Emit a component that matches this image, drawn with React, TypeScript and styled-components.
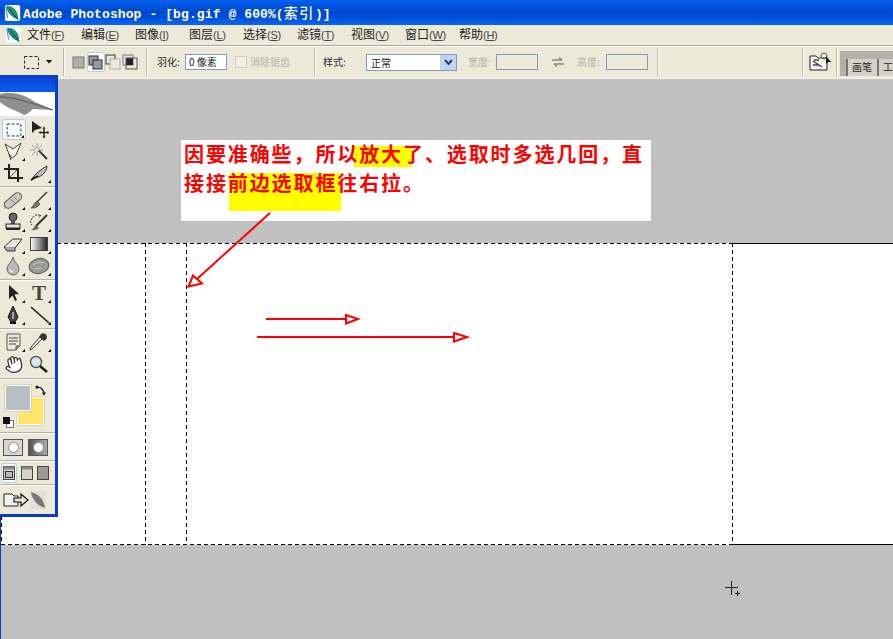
import React from "react";
import styled, { createGlobalStyle, css } from "styled-components";
import { Hand } from "lucide-react";

const Global = createGlobalStyle`
  html, body { margin: 0; padding: 0; background: #c0c0c0; overflow: hidden; }
  * { box-sizing: border-box; }
`;

const UI = `"Noto Sans CJK SC", "Liberation Sans", sans-serif`;
const Ml = css<{ $ml?: number }>`
  margin-left: ${(p) => p.$ml ?? 0}px;
  flex: none;
`;

const Page = styled.div`
  position: relative;
  width: 893px;
  height: 639px;
  display: flex;
  flex-direction: column;
  overflow: hidden;
  font-family: ${UI};
`;

/* title bar */
const TitleBar = styled.header`
  height: 25px;
  display: flex;
  align-items: center;
  padding-left: 4px;
  gap: 1px;
  background: linear-gradient(180deg, #0a62ee 0%, #0058e6 16%, #0048cc 48%, #0050dc 72%, #0a66f2 100%);
`;
const TitleText = styled.span`
  color: #fff;
  font: 700 13px/1 "Liberation Mono", "Noto Sans CJK SC", monospace;
  white-space: pre;
  letter-spacing: 0.1px;
`;
const TitleCjk = styled.span`
  font-family: "Noto Sans CJK SC", sans-serif;
  font-size: 14px;
  font-weight: 500;
  letter-spacing: 1.6px;
`;

/* menu bar */
const MenuBar = styled.nav`
  height: 20px;
  display: flex;
  align-items: center;
  padding: 0 0 1px 5px;
  background: #ece9d8;
`;
const MenuLogo = styled.span`
  width: 22px;
  height: 18px;
  flex: none;
  display: flex;
`;
const MenuItem = styled.span`
  width: 54px;
  flex: none;
  font-size: 12px;
  line-height: 18px;
  color: #1c1c1c;
  white-space: nowrap;
`;
const Mnemonic = styled.span`
  font-family: "Liberation Sans", sans-serif;
  font-size: 11px;
  color: #444;
  letter-spacing: -0.3px;
`;

/* options bar */
const OptionsBar = styled.div`
  height: 34px;
  display: flex;
  align-items: center;
  background: #ece9d8;
  border-top: 1px solid #aca899;
  box-shadow: inset 0 1px 0 #fff;
  border-bottom: 1px solid #f6f4ea;
`;
const Sep = styled.span<{ $ml?: number }>`
  ${Ml}
  width: 2px;
  height: 28px;
  background: linear-gradient(90deg, #bdbbac 50%, #fbfaf4 50%);
`;
const IconSlot = styled.span<{ $ml?: number; $w: number; $active?: boolean }>`
  ${Ml}
  width: ${(p) => p.$w}px;
  height: 18px;
  display: flex;
  align-items: center;
  justify-content: center;
  border-radius: 2px;
  ${(p) => p.$active && "background:#f7f9fb; box-shadow: 0 0 0 1px #b9cfe0;"}
`;
const OptLabel = styled.span<{ $ml?: number; $w: number; $off?: boolean }>`
  ${Ml}
  width: ${(p) => p.$w}px;
  font-size: 10px;
  line-height: 14px;
  white-space: nowrap;
  color: ${(p) => (p.$off ? "#b5b3a8" : "#2a2a2a")};
`;
const Field = styled.span<{ $ml?: number; $off?: boolean }>`
  ${Ml}
  width: 42px;
  height: 16px;
  background: ${(p) => (p.$off ? "#ece9d8" : "#fff")};
  border: 1px solid #7f9db9;
  font-size: 10px;
  line-height: 14px;
  padding-left: 3px;
  color: #222;
  white-space: nowrap;
`;
const Check = styled.span<{ $ml?: number }>`
  ${Ml}
  width: 12px;
  height: 12px;
  background: #f3f1e6;
  border: 1px solid #cfcdc0;
`;
const Dropdown = styled.span<{ $ml?: number }>`
  ${Ml}
  width: 91px;
  height: 17px;
  display: flex;
  background: #fff;
  border: 1px solid #7f9db9;
  font-size: 10px;
  line-height: 15px;
  color: #222;
`;
const DropValue = styled.span`
  flex: 1;
  padding-left: 4px;
`;
const DropButton = styled.span`
  width: 16px;
  background: #c1d3f2;
  display: flex;
  align-items: center;
  justify-content: center;
`;
const Fill = styled.span`
  flex: 1;
`;
const Well = styled.div`
  ${Ml}
  width: 53px;
  height: 25px;
  margin-top: 2px;
  background: #b4b2a8;
  display: flex;
  align-items: flex-end;
  padding-left: 6px;
  overflow: hidden;
`;
const WellTab = styled.span<{ $w: number }>`
  width: ${(p) => p.$w}px;
  flex: none;
  height: 17px;
  border-left: 2px solid #77766e;
  background: #d4d2c8;
  font-size: 10px;
  line-height: 16px;
  padding-left: 4px;
  color: #222;
  white-space: nowrap;
  overflow: hidden;
`;

/* workspace */
const Workspace = styled.main`
  flex: 1;
  display: flex;
  flex-direction: column;
  background: #c0c0c0;
  border-left: 1px solid #0a3cc8;
`;
const TopBand = styled.div`
  height: 164px;
  padding: 61px 0 0 180px;
`;
const Note = styled.div`
  position: relative;
  width: 470px;
  height: 81px;
  background: #fff;
  padding: 0 0 0 3px;
  font: 700 20px/29px "Noto Sans CJK SC", "Liberation Serif", serif;
  color: #ff0000;
  letter-spacing: 1.9px;
`;
const NoteLine = styled.div`
  position: relative;
  top: -1px;
  white-space: nowrap;
`;
const Mark = styled.span<{ $x: number; $y: number; $w: number; $h: number }>`
  position: absolute;
  left: ${(p) => p.$x}px;
  top: ${(p) => p.$y}px;
  width: ${(p) => p.$w}px;
  height: ${(p) => p.$h}px;
  background: #ffff00;
`;
const Doc = styled.div`
  position: relative;
  height: 302px;
  background: #fff;
  border-top: 1px solid #000;
  border-bottom: 1px solid #000;
`;
const Ants = styled.span<{ $x: number; $y: number; $len: number; $v?: boolean }>`
  position: absolute;
  left: ${(p) => p.$x}px;
  top: ${(p) => p.$y}px;
  width: ${(p) => (p.$v ? 1 : p.$len)}px;
  height: ${(p) => (p.$v ? p.$len : 1)}px;
  background: repeating-linear-gradient(
    ${(p) => (p.$v ? "180deg" : "90deg")},
    #000 0 4px,
    #fff 4px 7px
  );
`;

/* floating tool palette */
const Palette = styled.aside`
  position: absolute;
  left: 0;
  top: 75px;
  width: 58px;
  height: 442px;
  background: #ece9d8;
  border-right: 3px solid #0a3cc8;
  border-bottom: 3px solid #0a3cc8;
  display: flex;
  flex-direction: column;
`;
const PaletteHead = styled.div`
  height: 17px;
  flex: none;
  background: linear-gradient(180deg, #0a3cc8 0%, #0a52e0 55%, #0a5ef0 100%);
`;
const PaletteLogo = styled.div`
  height: 24px;
  flex: none;
  background: #fff;
`;
const Section = styled.div<{ $pt: number; $pb?: number; $h?: number }>`
  flex: none;
  padding-top: ${(p) => p.$pt}px;
  padding-bottom: ${(p) => p.$pb ?? 0}px;
  ${(p) => p.$h && `height:${p.$h}px;`}
  border-bottom: 1px solid #b4b2a4;
  box-shadow: 0 1px 0 #fff;
  margin-bottom: 1px;
`;
const ToolGrid = styled.div`
  display: grid;
  grid-template-columns: 26px 26px;
  grid-auto-rows: 22px;
`;
const Tool = styled.span<{ $flag?: boolean; $active?: boolean }>`
  position: relative;
  display: flex;
  align-items: center;
  justify-content: center;
  ${(p) => p.$active && "margin: 2px 1px 1px 3px; background:#f6f9fb; box-shadow: 0 0 0 1px #b6cde0; border-radius: 2px;"}
  ${(p) =>
    p.$flag &&
    `&::after{content:"";position:absolute;right:1px;bottom:1px;border-left:3px solid transparent;border-bottom:3px solid #000;}`}
`;
const TypeGlyph = styled.span`
  font: 700 21px/22px "Liberation Serif", serif;
  color: #444;
`;
const SwatchArea = styled.div`
  position: relative;
  height: 52px;
`;
const Swatch = styled.span<{ $x: number; $y: number; $w: number; $h: number; $c: string }>`
  position: absolute;
  left: ${(p) => p.$x}px;
  top: ${(p) => p.$y}px;
  width: ${(p) => p.$w}px;
  height: ${(p) => p.$h}px;
  background: ${(p) => p.$c};
  border: 1px solid #fff;
  box-shadow: 0 0 0 1px #d6d3c4;
`;
const SwatchIcon = styled.span<{ $x: number; $y: number }>`
  position: absolute;
  left: ${(p) => p.$x}px;
  top: ${(p) => p.$y}px;
  display: flex;
`;
const ModeRow = styled.div`
  display: flex;
  align-items: center;
  height: 100%;
`;
const ModeButton = styled.span<{ $active?: boolean; $dark?: boolean; $ml: number }>`
  margin-left: ${(p) => p.$ml}px;
  width: 20px;
  height: 17px;
  display: flex;
  align-items: center;
  justify-content: center;
  border: 1px solid #555;
  background: ${(p) => (p.$dark ? "linear-gradient(90deg,#555,#aaa)" : "#d8d6cc")};
  ${(p) => p.$active && "box-shadow: 0 0 0 1px #dce8f0;"}
`;
const ModeDot = styled.span`
  width: 11px;
  height: 11px;
  border-radius: 50%;
  background: #fff;
  border: 1px solid #888;
`;
const Overlay = styled.svg`
  position: absolute;
  left: 0;
  top: 0;
  pointer-events: none;
`;

/* drawings */
const Feather = ({ s = 20 }: { s?: number }) => (
  <svg width={s} height={s} viewBox="0 0 20 20">
    <rect x="1" y="1" width="17" height="18" rx="2" fill="#f4f8f6" />
    <path d="M3 3 C9 2 15 7 15 16 C9 15 4 9 3 3Z" fill="#1c9a84" stroke="#126b5e" strokeWidth="1" />
    <path d="M6 5 L16 18" stroke="#0d3a36" strokeWidth="1" />
    <path d="M2 3 L4 15" stroke="#3a7fb8" strokeWidth="1" />
  </svg>
);

const I = ({ children, w = 24, h = 20 }: { children: React.ReactNode; w?: number; h?: number }) => (
  <svg width={w} height={h} viewBox={`0 0 ${w} ${h}`} fill="none">
    {children}
  </svg>
);
const marquee = (
  <I>
    <rect x="4.5" y="3.5" width="15" height="13" stroke="#222" strokeDasharray="3 2" />
  </I>
);
const move = (
  <I>
    <path d="M5 2 L5 14 L8 11 L15 9Z" fill="#222" />
    <path d="M17 9 V18 M13 13.5 H21" stroke="#222" strokeWidth="1.4" />
    <path d="M17 7.5 l-1.5 2 h3Z M17 19.5 l-1.5 -2 h3Z M11.5 13.5 l2 -1.5 v3Z M22.5 13.5 l-2 -1.5 v3Z" fill="#222" />
  </I>
);
const lasso = (
  <I>
    <path d="M4 3 L12 8 L20 2 L15 14 L11 17 L8 13 Z" stroke="#444" fill="#f7f5ea" />
    <path d="M8 13 L10 19" stroke="#222" />
  </I>
);
const wand = (
  <I>
    <path d="M11 9 L20 18" stroke="#333" strokeWidth="2" />
    <path d="M10 2 V15 M3 9 H16 M5 4 L15 14 M15 4 L5 14" stroke="#888" strokeWidth=".8" />
    <circle cx="10" cy="9" r="1.6" fill="#fff" />
  </I>
);
const crop = (
  <I>
    <path d="M8 1 V15 H22 M3 6 H17 V19" stroke="#222" strokeWidth="2" />
    <path d="M9 14 L16 7" stroke="#555" />
  </I>
);
const slice = (
  <I>
    <path d="M4 17 C8 11 14 6 20 3 C20 8 16 12 12 14 L8 14 Z" fill="#bbb" stroke="#333" />
    <path d="M4 17 L11 13" stroke="#111" strokeWidth="1.5" />
  </I>
);
const heal = (
  <I>
    <rect x="2" y="6.5" width="20" height="8" rx="4" transform="rotate(-40 12 10.5)" fill="#c9c9c2" stroke="#555" />
    <path d="M9 9 l5 4 M13 7 l3 3" stroke="#888" />
    <path d="M3 12 v6 h5" stroke="#888" strokeDasharray="1 1" />
  </I>
);
const brush = (
  <I>
    <path d="M20 2 L10 12" stroke="#444" strokeWidth="1.6" />
    <path d="M10 11 L13 14 C10 18 7 18 4 18 C7 16 7 13 10 11Z" fill="#777" stroke="#333" strokeWidth=".7" />
  </I>
);
const stamp = (
  <I>
    <circle cx="12" cy="5" r="4" fill="#666" stroke="#222" />
    <rect x="10" y="8" width="4" height="5" fill="#555" />
    <rect x="5" y="12" width="14" height="4" fill="#e8e6d8" stroke="#222" />
    <rect x="5" y="16" width="14" height="2" fill="#222" />
  </I>
);
const history = (
  <I>
    <path d="M20 3 L9 14" stroke="#333" strokeWidth="2" />
    <path d="M9 13 L12 16 C9 19 6 18 4 18 C7 17 6 15 9 13Z" fill="#666" />
    <path d="M7 4 C3 8 3 11 5 13 M8 3 L14 3 L12 6" stroke="#333" strokeDasharray="2 1" />
  </I>
);
const eraser = (
  <I>
    <path d="M3 13 L12 5 L21 5 L14 14 L6 14Z" fill="#e8e6da" stroke="#333" />
    <path d="M3 13 L6 17 L14 17 L14 14" fill="#aaa" stroke="#333" />
  </I>
);
const gradient = (
  <svg width="24" height="20" viewBox="0 0 24 20">
    <defs>
      <linearGradient id="gr">
        <stop offset="0" stopColor="#fff" />
        <stop offset="1" stopColor="#222" />
      </linearGradient>
    </defs>
    <rect x="3.5" y="3.5" width="17" height="13" fill="url(#gr)" stroke="#444" />
  </svg>
);
const drop = (
  <I>
    <path d="M12 1 C13 6 18 9 18 13 A6 6 0 0 1 6 13 C6 9 11 6 12 1Z" fill="#b8b8b6" stroke="#666" />
    <path d="M9 13 a3 3 0 0 0 3 3" stroke="#fff" />
  </I>
);
const sponge = (
  <I>
    <ellipse cx="12" cy="10" rx="10" ry="7.5" transform="rotate(-12 12 10)" fill="#9a9a94" stroke="#555" />
    <path d="M6 9 l6 -3 l5 1 M7 13 l8 -1" stroke="#ccc" />
  </I>
);
const pathSel = (
  <I>
    <path d="M8 2 L8 16 L11.5 12.5 L14 18 L16 17 L13.5 11.5 L18 11Z" fill="#222" />
  </I>
);
const pen = (
  <I>
    <path d="M12 1 L17 12 L14 17 H10 L7 12Z" fill="#444" stroke="#111" />
    <path d="M12 7 V14" stroke="#fff" />
    <rect x="9" y="17" width="6" height="2" fill="#111" />
  </I>
);
const line = (
  <I>
    <path d="M4 2 L22 18" stroke="#222" strokeWidth="1.6" />
  </I>
);
const notes = (
  <I>
    <path d="M6 2 H19 V14 L15 18 H6Z" fill="#eceae0" stroke="#555" />
    <path d="M8 6 H17 M8 9 H17 M8 12 H15" stroke="#444" />
    <path d="M19 14 L15 14 V18" fill="#999" stroke="#555" />
  </I>
);
const dropper = (
  <I>
    <path d="M16 6 L5 17 L3 18 L4 15 L14 4Z" fill="#f2f0e6" stroke="#333" />
    <path d="M14 2 C16 0 20 2 20 5 C20 7 18 8 17 9 L12 5Z" fill="#333" />
  </I>
);
const hand = <Hand size={19} color="#333" fill="#fff" strokeWidth={1.6} style={{ transform: "rotate(-12deg)" }} />;
const zoom = (
  <I>
    <circle cx="9" cy="8" r="5.5" fill="#dfe6ea" stroke="#555" strokeWidth="1.4" />
    <path d="M13 12 L20 18" stroke="#222" strokeWidth="2.6" />
  </I>
);

const ModeIcon = ({ k }: { k: number }) => (
  <svg width="16" height="16" viewBox="0 0 16 16">
    {k === 0 && <rect x="2" y="3" width="11" height="11" fill="#b0aea6" stroke="#777" />}
    {k === 1 && (
      <>
        <rect x="1" y="2" width="9" height="9" fill="#999" stroke="#333" />
        <rect x="5" y="6" width="9" height="9" fill="#999" stroke="#333" />
      </>
    )}
    {k === 2 && (
      <>
        <rect x="1" y="1" width="9" height="9" fill="#ece9d8" stroke="#333" />
        <rect x="5" y="5" width="10" height="10" fill="#ece9d8" stroke="#aaa" />
      </>
    )}
    {k === 3 && (
      <>
        <rect x="1" y="1" width="10" height="10" fill="#e8e6da" stroke="#777" />
        <rect x="4" y="4" width="7" height="7" fill="#222" />
        <rect x="4" y="4" width="11" height="11" fill="none" stroke="#555" />
      </>
    )}
  </svg>
);

const ScreenIcon = ({ k }: { k: number }) => (
  <svg width="14" height="16" viewBox="0 0 14 16">
    <rect x="1.5" y="1.5" width="11" height="13" fill={k === 2 ? "#9a9a94" : "#d6d4ca"} stroke="#444" />
    {k < 2 && <rect x="1.5" y="1.5" width="11" height="3" fill="#888" />}
    {k === 0 && <rect x="3.5" y="6.5" width="7" height="6" fill="#bbb" stroke="#333" />}
  </svg>
);

const sections: { pt: number; pb: number; tools: { icon: React.ReactNode; flag?: boolean; active?: boolean }[] }[] = [
  {
    pt: 2,
    pb: 2,
    tools: [
      { icon: marquee, flag: true, active: true },
      { icon: move },
      { icon: lasso, flag: true },
      { icon: wand },
      { icon: crop },
      { icon: slice, flag: true },
    ],
  },
  {
    pt: 1,
    pb: 2,
    tools: [
      { icon: heal, flag: true },
      { icon: brush, flag: true },
      { icon: stamp, flag: true },
      { icon: history, flag: true },
      { icon: eraser, flag: true },
      { icon: gradient, flag: true },
      { icon: drop, flag: true },
      { icon: sponge, flag: true },
    ],
  },
  {
    pt: 1,
    pb: 2,
    tools: [
      { icon: pathSel, flag: true },
      { icon: <TypeGlyph>T</TypeGlyph>, flag: true },
      { icon: pen, flag: true },
      { icon: line, flag: true },
    ],
  },
  {
    pt: 1,
    pb: 3,
    tools: [
      { icon: notes, flag: true },
      { icon: dropper, flag: true },
      { icon: hand },
      { icon: zoom },
    ],
  },
];

const menus: [string, string][] = [
  ["文件", "F"],
  ["编辑", "E"],
  ["图像", "I"],
  ["图层", "L"],
  ["选择", "S"],
  ["滤镜", "T"],
  ["视图", "V"],
  ["窗口", "W"],
  ["帮助", "H"],
];

export default function App() {
  return (
    <Page>
      <Global />
      <TitleBar>
        <Feather s={18} />
        <TitleText>
          Adobe Photoshop - [bg.gif @ 600%(<TitleCjk>索引</TitleCjk>)]
        </TitleText>
      </TitleBar>
      <MenuBar>
        <MenuLogo>
          <Feather s={18} />
        </MenuLogo>
        {menus.map(([t, k]) => (
          <MenuItem key={k}>
            {t}
            <Mnemonic>
              (<u>{k}</u>)
            </Mnemonic>
          </MenuItem>
        ))}
      </MenuBar>
      <OptionsBar>
        <IconSlot $ml={21} $w={20}>
          <svg width="17" height="15" viewBox="0 0 17 15">
            <rect x="1.5" y="1.5" width="14" height="12" fill="none" stroke="#222" strokeDasharray="3 2" />
          </svg>
        </IconSlot>
        <IconSlot $ml={4} $w={8}>
          <svg width="6" height="4" viewBox="0 0 6 4">
            <path d="M0 0 H6 L3 3.5Z" fill="#111" />
          </svg>
        </IconSlot>
        <Sep $ml={10} />
        <IconSlot $ml={6} $w={16}>
          <ModeIcon k={0} />
        </IconSlot>
        <IconSlot $ml={1} $w={16} $active>
          <ModeIcon k={1} />
        </IconSlot>
        <IconSlot $ml={1} $w={16}>
          <ModeIcon k={2} />
        </IconSlot>
        <IconSlot $ml={1} $w={16}>
          <ModeIcon k={3} />
        </IconSlot>
        <Sep $ml={8} />
        <OptLabel $ml={9} $w={25}>羽化:</OptLabel>
        <Field $ml={3}>0 像素</Field>
        <Check $ml={8} />
        <OptLabel $ml={3} $w={38} $off>消除锯齿</OptLabel>
        <Sep $ml={26} />
        <OptLabel $ml={7} $w={25}>样式:</OptLabel>
        <Dropdown $ml={18}>
          <DropValue>正常</DropValue>
          <DropButton>
            <svg width="9" height="7" viewBox="0 0 9 7">
              <path d="M1 1 L4.5 5 L8 1" fill="none" stroke="#2a3f70" strokeWidth="2" />
            </svg>
          </DropButton>
        </Dropdown>
        <OptLabel $ml={11} $w={24} $off>宽度:</OptLabel>
        <Field $ml={4} $off />
        <IconSlot $ml={14} $w={12}>
          <svg width="12" height="10" viewBox="0 0 12 10">
            <path d="M0 3 H10 M7 0.5 L10 3 M12 7 H2 M5 9.5 L2 7" fill="none" stroke="#8a887c" strokeWidth="1.4" />
          </svg>
        </IconSlot>
        <OptLabel $ml={13} $w={24} $off>高度:</OptLabel>
        <Field $ml={5} $off />
        <Sep $ml={9} />
        <Fill />
        <Sep />
        <IconSlot $ml={4} $w={24}>
          <svg width="24" height="20" viewBox="0 0 24 20">
            <path d="M2 4 H8 L10 6 H19 V18 H2Z" fill="#f6f6f0" stroke="#222" />
            <path d="M5 9 L14 15 M5 13 H11 M6 8 H11" stroke="#444" strokeWidth="1.4" />
            <circle cx="16" cy="4" r="3" fill="none" stroke="#666" />
            <path d="M18 4 L18 12 L20 10 L23 10Z" fill="#111" />
          </svg>
        </IconSlot>
        <Sep $ml={4} />
        <Well $ml={2}>
          <WellTab $w={31}>画笔</WellTab>
          <WellTab $w={18}>工</WellTab>
        </Well>
      </OptionsBar>
      <Workspace>
        <TopBand>
          <Note>
            <Mark $x={173} $y={6} $w={58} $h={21} />
            <Mark $x={48} $y={33} $w={112} $h={38} />
            <NoteLine>因要准确些，所以放大了、选取时多选几回，直</NoteLine>
            <NoteLine>接接前边选取框往右拉。</NoteLine>
          </Note>
        </TopBand>
        <Doc>
          <Ants $x={0} $y={-1} $len={732} />
          <Ants $x={0} $y={300} $len={732} />
          <Ants $x={0} $y={-1} $len={302} $v />
          <Ants $x={144} $y={-1} $len={302} $v />
          <Ants $x={185} $y={-1} $len={302} $v />
          <Ants $x={731} $y={-1} $len={302} $v />
        </Doc>
      </Workspace>
      <Palette>
        <PaletteHead />
        <PaletteLogo>
          <svg width="55" height="24" viewBox="0 0 55 24">
            <path d="M0 2 C8 0 22 0 35 10 L53 18 L33 17 C30 20 26 23 24 23 C16 18 6 16 0 10Z" fill="#8f8f8f" />
            <path d="M0 5 C14 5 28 10 53 18" stroke="#555" strokeWidth="1" fill="none" />
          </svg>
        </PaletteLogo>
        {sections.map((s, i) => (
          <Section key={i} $pt={s.pt} $pb={s.pb}>
            <ToolGrid>
              {s.tools.map((t, j) => (
                <Tool key={j} $flag={t.flag} $active={t.active}>
                  {t.icon}
                </Tool>
              ))}
            </ToolGrid>
          </Section>
        ))}
        <Section $pt={0} $h={53}>
          <SwatchArea>
            <Swatch $x={17} $y={17} $w={27} $h={28} $c="#ffe566" />
            <Swatch $x={5} $y={5} $w={26} $h={26} $c="#b9c0c5" />
            <SwatchIcon $x={35} $y={5}>
              <svg width="11" height="11" viewBox="0 0 11 11">
                <path d="M2 1 L2 4 M0.5 2.5 L2 1 L3.5 2.5 M2 2 C6 2 9 5 9 9 M7.5 7.5 L9 9.5 L10.5 7.5" fill="none" stroke="#111" strokeWidth="1.2" />
              </svg>
            </SwatchIcon>
            <SwatchIcon $x={3} $y={37}>
              <svg width="11" height="11" viewBox="0 0 11 11">
                <rect x="3.5" y="3.5" width="7" height="7" fill="#fff" stroke="#777" />
                <rect x="0" y="0" width="7" height="7" fill="#111" />
              </svg>
            </SwatchIcon>
          </SwatchArea>
        </Section>
        <Section $pt={0} $h={27}>
          <ModeRow>
            <ModeButton $ml={3} $active>
              <ModeDot />
            </ModeButton>
            <ModeButton $ml={5} $dark>
              <ModeDot />
            </ModeButton>
          </ModeRow>
        </Section>
        <Section $pt={0} $h={23}>
          <ModeRow>
            <IconSlot $ml={2} $w={14} $active>
              <ScreenIcon k={0} />
            </IconSlot>
            <IconSlot $ml={4} $w={14}>
              <ScreenIcon k={1} />
            </IconSlot>
            <IconSlot $ml={2} $w={14}>
              <ScreenIcon k={2} />
            </IconSlot>
          </ModeRow>
        </Section>
        <ModeRow>
          <IconSlot $ml={3} $w={26}>
            <svg width="26" height="18" viewBox="0 0 26 18">
              <path d="M1 3 H9 L11 5 H15 V15 H1Z" fill="#f2f2ec" stroke="#222" />
              <path d="M11 7 H18 V3 L25 9 L18 15 V11 H11Z" fill="#e8e6da" stroke="#111" strokeWidth="1.2" />
            </svg>
          </IconSlot>
          <IconSlot $ml={1} $w={16}>
            <svg width="16" height="18" viewBox="0 0 16 18">
              <rect width="16" height="18" fill="#e2e0d6" />
              <path d="M1 1 C9 3 14 9 15 17 C8 15 2 9 1 1Z" fill="#777" />
            </svg>
          </IconSlot>
        </ModeRow>
      </Palette>
      <Overlay width={893} height={639} viewBox="0 0 893 639" fill="none">
        <g stroke="#ff0000" strokeWidth="2">
          <path d="M270 213 L197 279" />
          <path d="M188.5 286.5 L193 275.5 L202 283.5Z" fill="#fff" />
          <path d="M266 319 H346" />
          <path d="M346 315 L358 319 L346 323.5Z" fill="#fff" />
          <path d="M257 337 H454" />
          <path d="M454 333 L467 337 L454 341.5Z" fill="#fff" />
        </g>
        <path d="M731.5 581 V595 M725 587.5 H738 M737.5 591 V596 M735 593.5 H740" stroke="#222" strokeWidth="1" />
      </Overlay>
    </Page>
  );
}
